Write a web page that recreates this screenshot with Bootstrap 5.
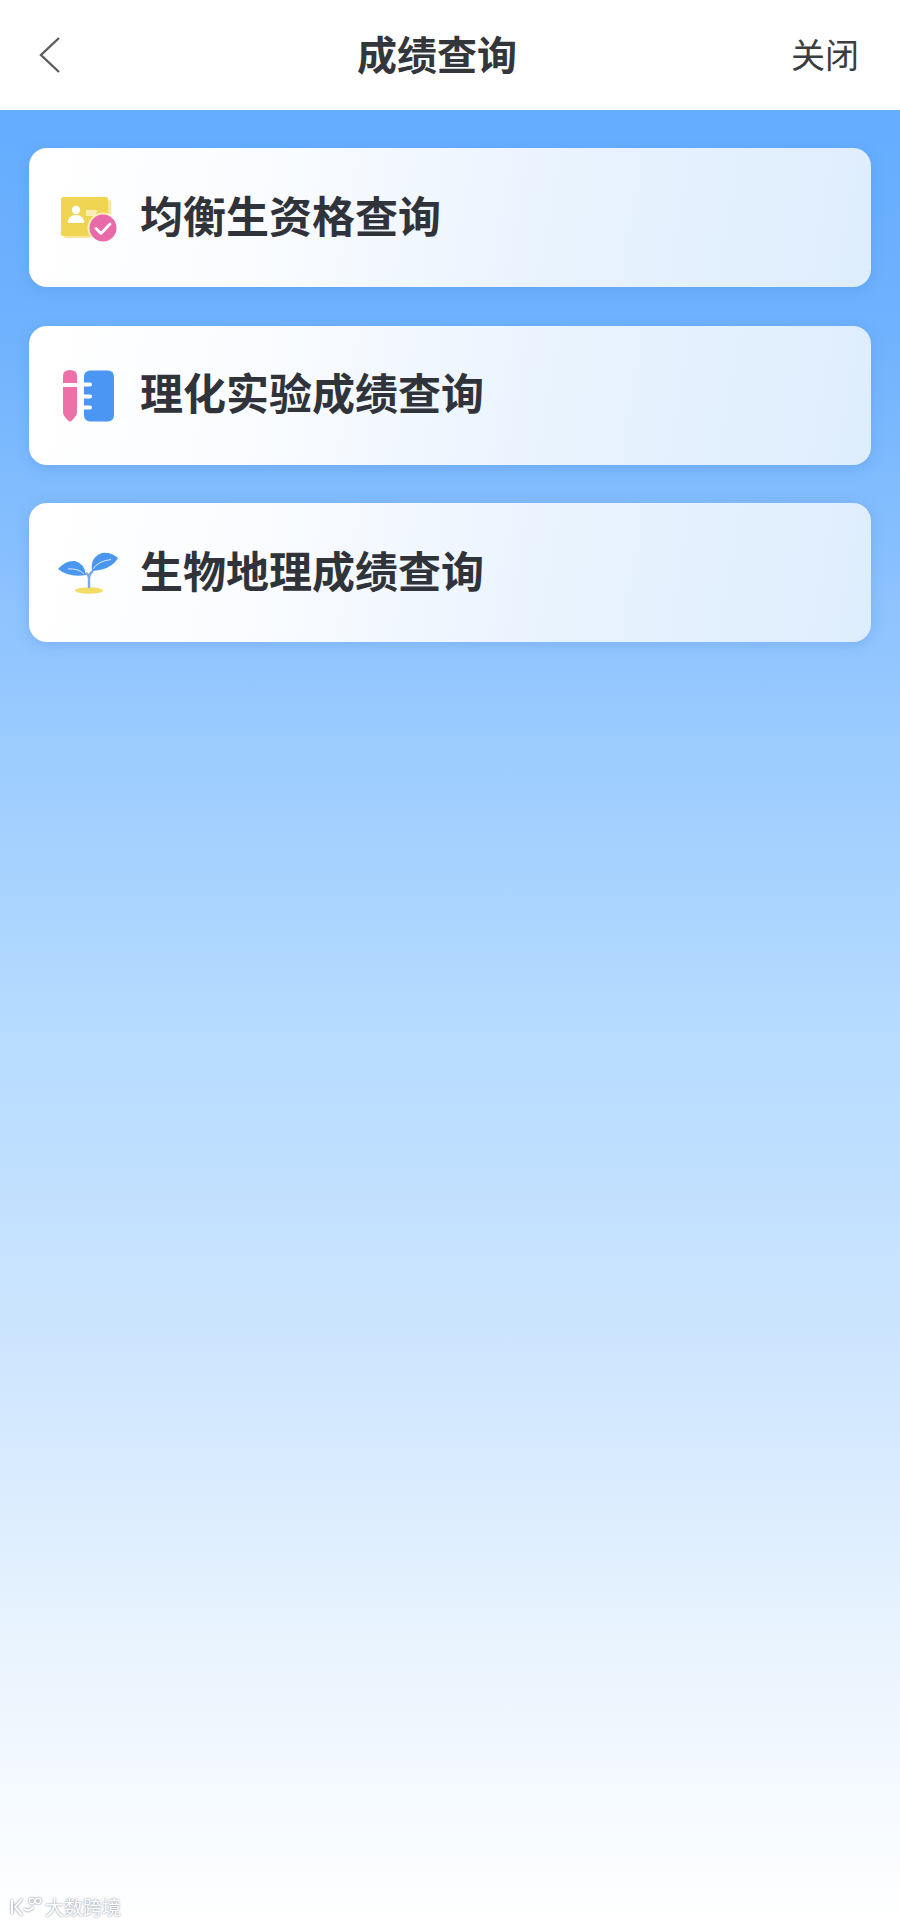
<!DOCTYPE html>
<html lang="zh">
<head>
<meta charset="utf-8">
<title>成绩查询</title>
<link href="https://cdn.jsdelivr.net/npm/bootstrap@5.3.0/dist/css/bootstrap.min.css" rel="stylesheet">
<style>
html,body{height:100%;margin:0}
body{font-family:"Noto Sans CJK SC","Liberation Sans",sans-serif;color:#30343a;overflow:hidden;position:relative;width:900px;height:1925px}
.top-bar{height:110px;background:#fff;padding:0 41px 0 36px}
.back-link{width:47px;height:42px;display:block}
.page-title{font-size:40px;font-weight:700;line-height:1;padding-bottom:5px;color:#33363b}
.close-text{font-size:34px;line-height:1;padding-bottom:2px;color:#3a3d42;font-weight:400}
.sky{height:1815px;padding:38px 29px 0;background:linear-gradient(180deg,#64adff 0%,#6fb2fd 12%,#96c8ff 32%,#b5dbff 50%,#cde5fe 68%,#e8f3fe 84%,#fff 100%)}
.result-card{height:139px;border:0;border-radius:18px;background:linear-gradient(100deg,#fff 0%,#fafcff 28%,#e9f3fe 62%,#deedfd 100%);box-shadow:0 3px 14px rgba(70,130,220,.28);margin-bottom:38.500px;padding-left:29px;gap:22px;text-decoration:none}
.card-glyph{width:60px;height:60px;flex:none;display:block}
.card-label{font-size:43px;font-weight:700;line-height:1;padding-bottom:7px;color:#30343a}
.watermark{position:absolute;left:9px;bottom:6px;color:#fff;font-size:19px;line-height:24px;text-shadow:0 0 2px rgba(70,85,110,.8)}
.wm-logo{width:36px;height:24px;filter:drop-shadow(0 0 1px rgba(70,85,110,.8))}
</style>
</head>
<body>
<header class="top-bar d-flex align-items-center justify-content-between">
  <a class="back-link" href="#" aria-label="返回">
    <svg width="30" height="42" viewBox="0 0 30 42"><path d="M23 4 L5 21 L23 38" fill="none" stroke="#5a5d61" stroke-width="2.400"/></svg>
  </a>
  <h1 class="page-title m-0">成绩查询</h1>
  <span class="close-text">关闭</span>
</header>
<main class="sky">
  <a href="#" class="result-card card flex-row align-items-center">
    <svg class="card-glyph" viewBox="0 0 60 60">
      <rect x="6" y="12" width="47" height="38" rx="2" fill="#f8e69a"/>
      <rect x="3" y="9" width="47" height="39" rx="2" fill="#f0d552"/>
      <circle cx="18" cy="22" r="4.200" fill="#fff"/>
      <path d="M10 35q0-8 8-8q8 0 8 8z" fill="#fff"/>
      <path d="M28 22h12l-3 6h-9z" fill="#fbeeb4"/>
      <circle cx="45" cy="40" r="15.500" fill="#fff" opacity=".6"/>
      <circle cx="45" cy="40" r="13.500" fill="#e96aa9"/>
      <path d="M38 40.500l5 5 9-9.500" fill="none" stroke="#fff" stroke-width="2.800" stroke-linecap="round" stroke-linejoin="round"/>
    </svg>
    <span class="card-label">均衡生资格查询</span>
  </a>
  <a href="#" class="result-card card flex-row align-items-center">
    <svg class="card-glyph" viewBox="0 0 60 60">
      <path d="M5 11q0-6 7-6q7 0 7 6v7H5z" fill="#ed70a8"/>
      <path d="M5 22h14v25q0 3-2 5l-3 3.500q-2 2-4 0l-3-3.500q-2-2-2-5z" fill="#ed70a8"/>
      <rect x="26" y="5.500" width="30" height="51" rx="6" fill="#4b96f3"/>
      <g fill="#fff"><rect x="23" y="17.500" width="11" height="4" rx="2"/><rect x="23" y="29.500" width="11" height="4" rx="2"/><rect x="23" y="40.500" width="11" height="4" rx="2"/></g>
    </svg>
    <span class="card-label">理化实验成绩查询</span>
  </a>
  <a href="#" class="result-card card flex-row align-items-center">
    <svg class="card-glyph" viewBox="0 0 60 60">
      <ellipse cx="31" cy="47.500" rx="14" ry="3.200" fill="#f3dc66"/>
      <path d="M31 45V35q0-3-3-5M31 36q0-5 4-8" fill="none" stroke="#7ea9dc" stroke-width="2.400"/>
      <path d="M0 26Q8 17 17 18q9 2 11 14Q11 35 0 26z" fill="#4b96ee"/>
      <path d="M10 26q10-1 16 5" fill="none" stroke="#d7e8fb" stroke-width="1"/>
      <path d="M34 28Q32 14 44 10q9-1 16 5Q53 27 34 28z" fill="#4b96ee"/>
      <path d="M35 26q5-8 18-9.500" fill="none" stroke="#d7e8fb" stroke-width="1"/>
    </svg>
    <span class="card-label">生物地理成绩查询</span>
  </a>
</main>
<div class="watermark d-flex align-items-center">
  <svg class="wm-logo" viewBox="0 0 36 24"><g fill="none" stroke="#fff" stroke-width="2"><path d="M3 5v14M13 4L6 12l7 8"/><path d="M15 14a6 6 0 0 0 9-2"/><circle cx="23" cy="6" r="2.600" stroke-width="1.400"/><circle cx="29" cy="6" r="2.600" stroke-width="1.400"/></g></svg>
  <span>大数跨境</span>
</div>
</body>
</html>
